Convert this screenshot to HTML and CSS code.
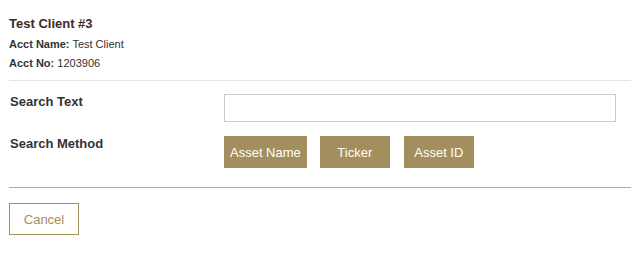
FILE: index.html
```html
<!DOCTYPE html>
<html lang="en">
<head>
    <meta charset="UTF-8">
    <title>Search Assets</title>
    <link rel="stylesheet" href="styles.css">
</head>
<body>
    <div class="dialog">
        <!-- Client header -->
        <div class="client-info">
            <div class="client-name">Test Client #3</div>
            <div class="client-line"><b>Acct Name:</b> Test Client</div>
            <div class="client-line"><b>Acct No:</b> 1203906</div>
        </div>

        <!-- Search form -->
        <div class="search-form">
            <label class="form-label" for="search-text">Search Text</label>
            <div class="form-field">
                <input type="text" id="search-text" class="text-input">
            </div>

            <div class="form-label">Search Method</div>
            <div class="form-field method-buttons">
                <button class="btn-method">Asset Name</button>
                <button class="btn-method">Ticker</button>
                <button class="btn-method">Asset ID</button>
            </div>
        </div>

        <div class="footer">
            <button class="btn-cancel">Cancel</button>
        </div>
    </div>
</body>
</html>
```

FILE: styles.css
```css
* {
    margin: 0;
    padding: 0;
    box-sizing: border-box;
}

body {
    font-family: "Liberation Sans", Arial, sans-serif;
    color: #333;
    background: #fff;
}

.dialog {
    padding: 14px 0 0 9px;
}

/* Client header */
.client-info {
    padding-bottom: 7px;
    border-bottom: 1px solid #e3e3e3;
}

.client-name {
    font-size: 13px;
    font-weight: bold;
    color: #3b2a2a;
    line-height: 20px;
    margin-bottom: 1px;
}

.client-line {
    font-size: 11px;
    line-height: 19px;
    color: #333;
}

/* Search form */
.search-form {
    display: grid;
    grid-template-columns: 215px 392px;
    row-gap: 14px;
    padding: 13px 0 19px;
    border-bottom: 1px solid #aaa;
}

.form-label {
    font-size: 13px;
    font-weight: bold;
    color: #333;
    padding: 1px 0 0 1px;
    line-height: 14px;
}

.text-input {
    width: 392px;
    height: 28px;
    border: 1px solid #ccc;
    padding: 0 6px;
    font-family: inherit;
    font-size: 13px;
    outline: none;
}

.method-buttons {
    display: flex;
    gap: 13px;
}

.btn-method {
    min-width: 70px;
    height: 32px;
    padding: 0 6px;
    border: none;
    background: #a38f5e;
    color: #fff;
    font-family: inherit;
    font-size: 13px;
    cursor: pointer;
}

.btn-method + .btn-method + .btn-method {
    margin-left: 1px;
}

/* Footer */
.footer {
    padding-top: 15px;
}

.btn-cancel {
    width: 70px;
    height: 32px;
    border: 1px solid #a38f5e;
    background: #fff;
    color: #a38f5e;
    font-family: inherit;
    font-size: 13px;
    cursor: pointer;
}
```
